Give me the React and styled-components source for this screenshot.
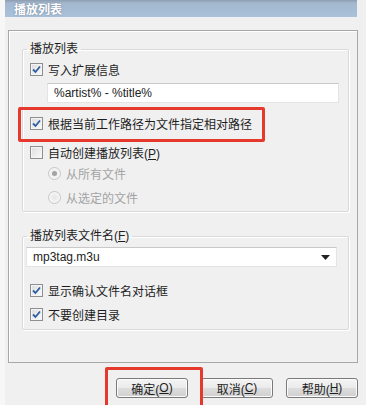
import React from 'react'
import styled, { createGlobalStyle } from 'styled-components'

const GlobalStyle = createGlobalStyle`
  html, body {
    margin: 0;
    padding: 0;
    background: #f0f0f0;
  }
  body {
    font-family: "Liberation Sans", "Noto Sans CJK SC", sans-serif;
    font-size: 12px;
    color: #1e1e1e;
  }
`

const Page = styled.div`
  position: relative;
  width: 366px;
  height: 405px;
  overflow: hidden;
  background: #f0f0f0;
  border-left: 5px solid #f7f7f7;
  box-sizing: border-box;
`

const TitleBar = styled.div`
  width: 352px;
  height: 17px;
  display: flex;
  align-items: center;
  padding-left: 9px;
  box-sizing: border-box;
  background: linear-gradient(#8e9db0 0px, #a3b8cf 3px, #a9c1d9 100%);
  color: #fff;
  font-weight: bold;
  font-size: 12px;
  text-shadow: 0 0 2px #6d7f95;
`

const Frame = styled.div`
  margin: 13px 0 0 3px;
  width: 350px;
  height: 333px;
  box-sizing: border-box;
  border: 1px solid #a7a7a7;
  box-shadow: inset 1px 1px 0 #fff;
  padding: 10px 8px 0 13px;
`

const Group = styled.fieldset`
  margin: ${p => p.$top || 0}px 0 0 0;
  padding: ${p => p.$pt}px 0 ${p => p.$pb}px 0;
  border: 1px solid #d9d9d9;
  box-shadow: 1px 1px 0 #fff, inset 1px 1px 0 #fff;
  border-radius: 2px;
  min-width: 0;
`

const Legend = styled.legend`
  margin-left: 4px;
  padding: 0 3px;
  height: 16px;
  line-height: 16px;
  font-size: 12px;
  color: #1e1e1e;
`

const Row = styled.div`
  display: flex;
  align-items: center;
  height: 16px;
  margin-top: ${p => p.$top || 0}px;
  margin-left: ${p => p.$left || 7}px;
  gap: ${p => p.$gap || 5}px;
  font-size: 12px;
  color: ${p => (p.$disabled ? '#a3a3a3' : '#1e1e1e')};
  white-space: nowrap;
`

const Box = styled.span`
  width: 11px;
  height: 11px;
  flex: none;
  border: 1px solid #8e8f8f;
  background: linear-gradient(135deg, #dcdcdc, #fbfbfb);
  box-shadow: inset 0 0 0 1px #f4f4f4;
  display: flex;
  align-items: center;
  justify-content: center;
`

const RadioDot = styled.span`
  width: 11px;
  height: 11px;
  flex: none;
  border-radius: 50%;
  border: 1px solid #c6c6c6;
  background: radial-gradient(circle, #e6e6e6 0, #f6f6f6 70%);
  display: flex;
  align-items: center;
  justify-content: center;
  &::after {
    content: '';
    width: 5px;
    height: 5px;
    border-radius: 50%;
    background: ${p => (p.$on ? '#a4a4a4' : 'transparent')};
  }
`

const TextInput = styled.div`
  margin: ${p => p.$top}px ${p => p.$right}px 0 ${p => p.$left}px;
  height: 20px;
  box-sizing: border-box;
  border: 1px solid #e4e4e4;
  border-top-color: #c9c9c9;
  background: #fff;
  display: flex;
  align-items: center;
  padding: 0 6px;
  font-size: 12px;
  color: #222;
  justify-content: space-between;
`

const ButtonBar = styled.div`
  display: flex;
  justify-content: flex-end;
  gap: 13px;
  width: 353px;
  margin-top: 15px;
`

const Button = styled.div`
  width: 72px;
  height: 20px;
  box-sizing: border-box;
  border: 1px solid #7a7a7a;
  border-radius: 3px;
  background: linear-gradient(#f4f4f4 0%, #ebebeb 48%, #dddddd 52%, #d0d0d0 100%);
  box-shadow: inset 0 0 0 1px #fcfcfc;
  display: flex;
  align-items: center;
  justify-content: center;
  font-size: 12px;
  color: #1e1e1e;
`

const Highlight = styled.div`
  position: absolute;
  left: ${p => p.$x}px;
  top: ${p => p.$y}px;
  width: ${p => p.$w}px;
  height: ${p => p.$h}px;
  box-sizing: border-box;
  border: 3px solid #e6392d;
  border-radius: 2px;
`

function Check({ on = true }) {
  return (
    <Box>
      {on && (
        <svg width="9" height="9" viewBox="0 0 9 9">
          <path d="M1 4.5 L3.5 7 L8 1.5" fill="none" stroke="#2d5ea3" strokeWidth="1.8" />
        </svg>
      )}
    </Box>
  )
}

function CheckRow({ on, top, children }) {
  return (
    <Row $top={top}>
      <Check on={on} />
      <span>{children}</span>
    </Row>
  )
}

export default function App() {
  return (
    <Page>
      <GlobalStyle />
      <TitleBar>播放列表</TitleBar>
      <Frame>
        <Group $pt={4} $pb={6}>
          <Legend>播放列表</Legend>
          <CheckRow top={0} on>写入扩展信息</CheckRow>
          <TextInput $top={6} $left={24} $right={9}>%artist% - %title%</TextInput>
          <CheckRow top={12} on>根据当前工作路径为文件指定相对路径</CheckRow>
          <CheckRow top={13} on={false}>自动创建播放列表(<u>P</u>)</CheckRow>
          <Row $top={5} $left={25} $disabled>
            <RadioDot $on />
            <span>从所有文件</span>
          </Row>
          <Row $top={8} $left={25} $disabled>
            <RadioDot />
            <span>从选定的文件</span>
          </Row>
        </Group>
        <Group $top={16} $pt={3} $pb={7}>
          <Legend>播放列表文件名(<u>F</u>)</Legend>
          <TextInput $top={0} $left={3} $right={11}>
            <span>mp3tag.m3u</span>
            <svg width="9" height="5" viewBox="0 0 9 5">
              <path d="M0 0 H9 L4.5 5 Z" fill="#222" />
            </svg>
          </TextInput>
          <CheckRow top={15} on>显示确认文件名对话框</CheckRow>
          <CheckRow top={8} on>不要创建目录</CheckRow>
        </Group>
      </Frame>
      <ButtonBar>
        <Button>确定(<u>O</u>)</Button>
        <Button>取消(<u>C</u>)</Button>
        <Button>帮助(<u>H</u>)</Button>
      </ButtonBar>
      <Highlight $x={13} $y={107} $w={247} $h={35} />
      <Highlight $x={100} $y={367} $w={98} $h={45} />
    </Page>
  )
}
